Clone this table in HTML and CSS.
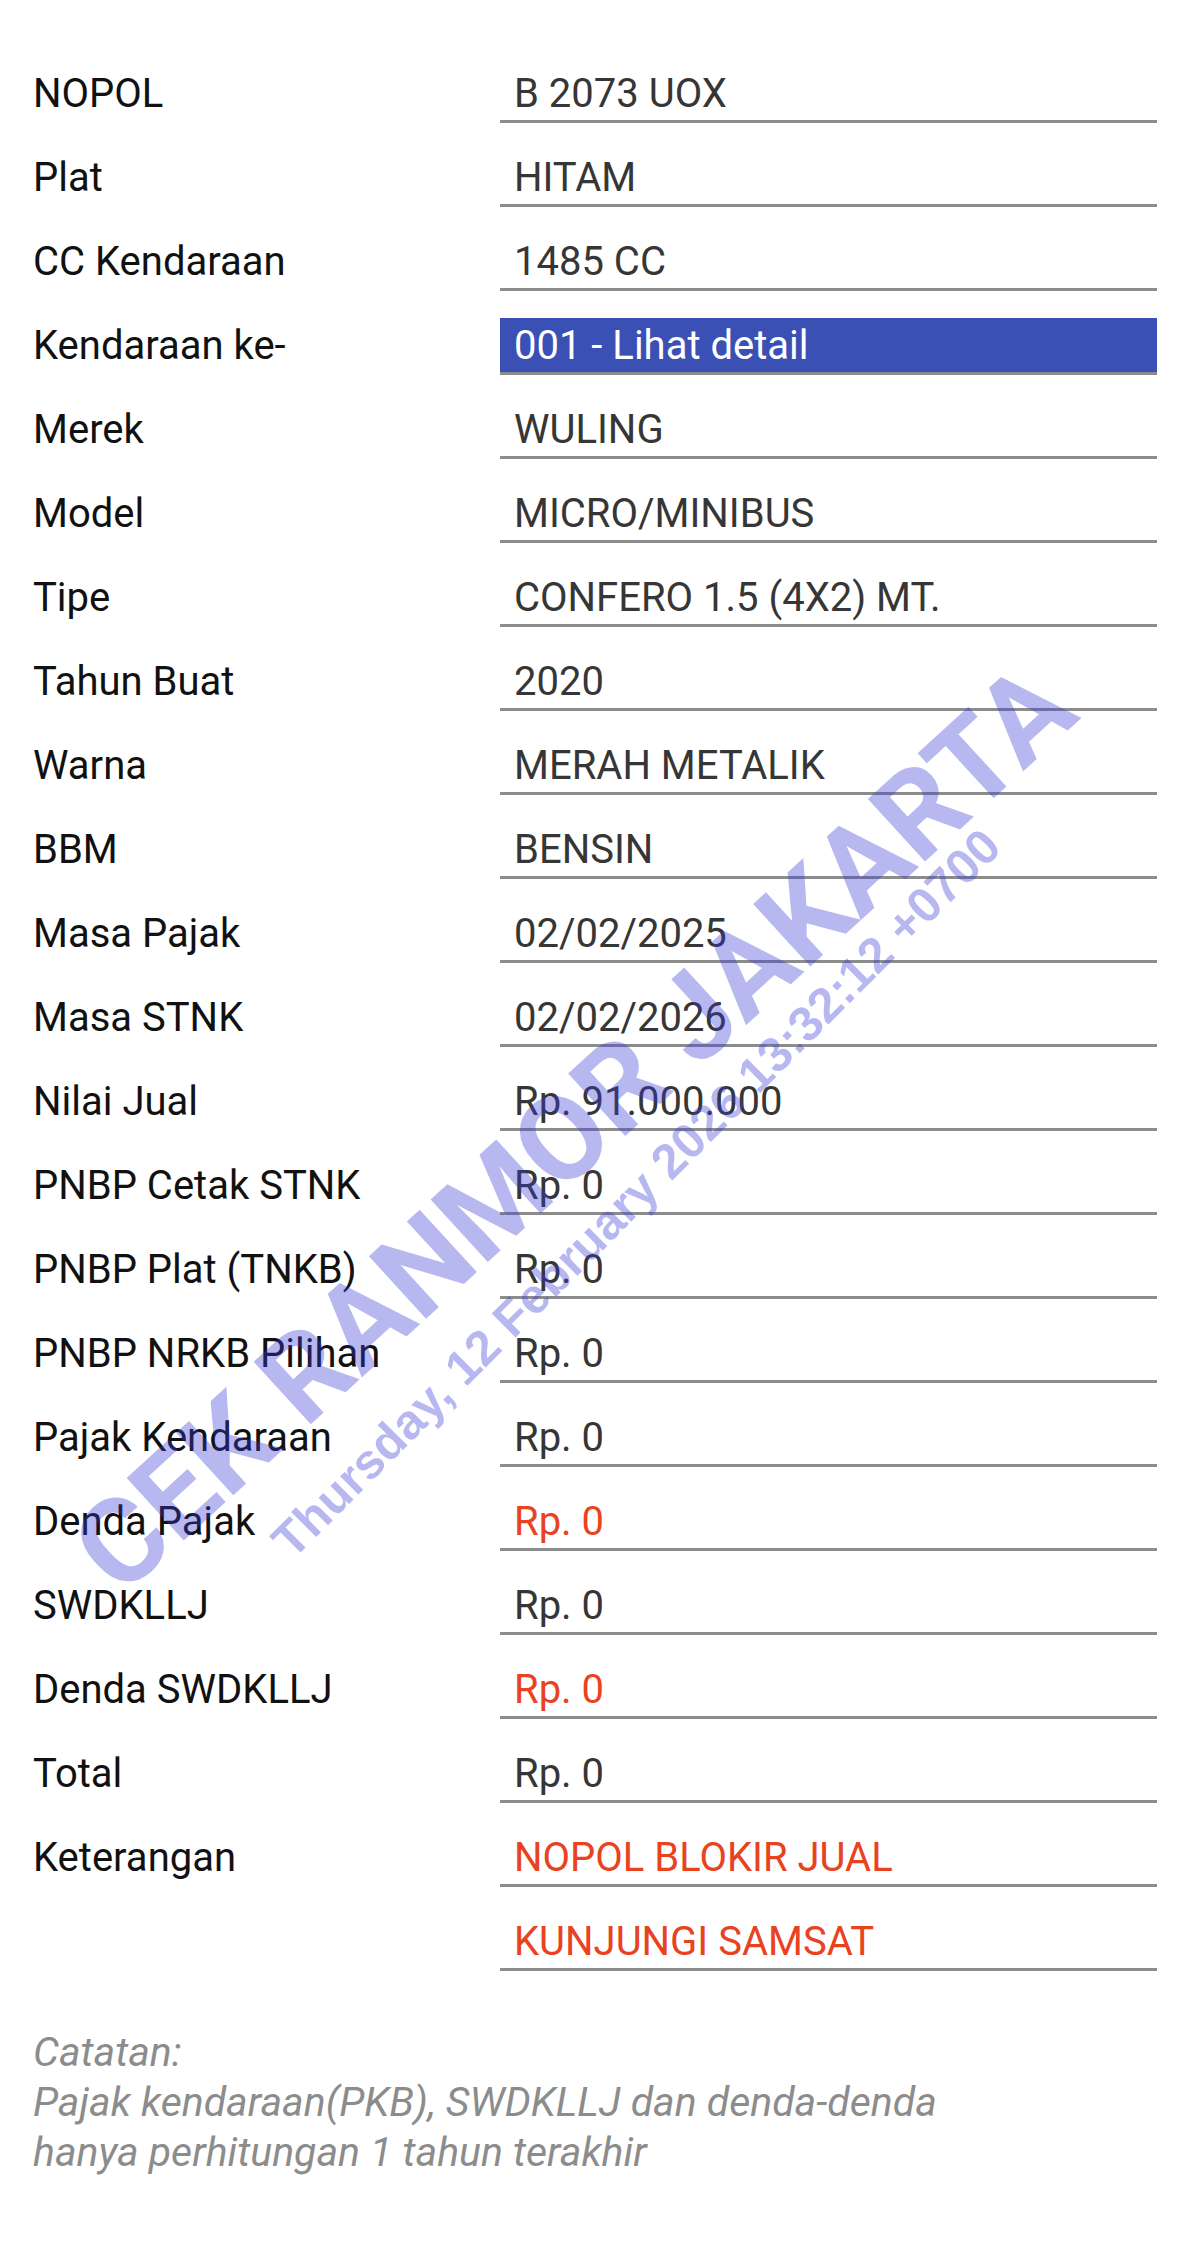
FILE: index.html
```html
<!DOCTYPE html>
<html lang="id">
<head>
<meta charset="utf-8">
<title>Cek Ranmor</title>
<link rel="stylesheet" href="styles.css">
</head>
<body>
<main class="page">
  <div class="table">
    <div class="row"><div class="label">NOPOL</div><div class="value">B 2073 UOX</div></div>
    <div class="row"><div class="label">Plat</div><div class="value">HITAM</div></div>
    <div class="row"><div class="label">CC Kendaraan</div><div class="value">1485 CC</div></div>
    <div class="row"><div class="label">Kendaraan ke-</div><div class="value value-link">001 - Lihat detail</div></div>
    <div class="row"><div class="label">Merek</div><div class="value">WULING</div></div>
    <div class="row"><div class="label">Model</div><div class="value">MICRO/MINIBUS</div></div>
    <div class="row"><div class="label">Tipe</div><div class="value">CONFERO 1.5 (4X2) MT.</div></div>
    <div class="row"><div class="label">Tahun Buat</div><div class="value">2020</div></div>
    <div class="row"><div class="label">Warna</div><div class="value">MERAH METALIK</div></div>
    <div class="row"><div class="label">BBM</div><div class="value">BENSIN</div></div>
    <div class="row"><div class="label">Masa Pajak</div><div class="value">02/02/2025</div></div>
    <div class="row"><div class="label">Masa STNK</div><div class="value">02/02/2026</div></div>
    <div class="row"><div class="label">Nilai Jual</div><div class="value">Rp. 91.000.000</div></div>
    <div class="row"><div class="label">PNBP Cetak STNK</div><div class="value">Rp. 0</div></div>
    <div class="row"><div class="label">PNBP Plat (TNKB)</div><div class="value">Rp. 0</div></div>
    <div class="row"><div class="label">PNBP NRKB Pilihan</div><div class="value">Rp. 0</div></div>
    <div class="row"><div class="label">Pajak Kendaraan</div><div class="value">Rp. 0</div></div>
    <div class="row"><div class="label">Denda Pajak</div><div class="value value-red">Rp. 0</div></div>
    <div class="row"><div class="label">SWDKLLJ</div><div class="value">Rp. 0</div></div>
    <div class="row"><div class="label">Denda SWDKLLJ</div><div class="value value-red">Rp. 0</div></div>
    <div class="row"><div class="label">Total</div><div class="value">Rp. 0</div></div>
    <div class="row"><div class="label">Keterangan</div><div class="value value-red">NOPOL BLOKIR JUAL</div></div>
    <div class="row"><div class="label"></div><div class="value value-red">KUNJUNGI SAMSAT</div></div>
  </div>

  <div class="notes">
    <p>Catatan:</p>
    <p>Pajak kendaraan(PKB), SWDKLLJ dan denda-denda</p>
    <p>hanya perhitungan 1 tahun terakhir</p>
  </div>
</main>

<div class="watermark" aria-hidden="true">
  <span class="wm-main">CEK RANMOR JAKARTA</span>
  <span class="wm-date">Thursday, 12 February 2026 13:32:12 +0700</span>
</div>
</body>
</html>
```

FILE: styles.css
```css
html, body {
  margin: 0;
  padding: 0;
  background: #ffffff;
}

body {
  width: 1200px;
  height: 2254px;
  position: relative;
  overflow: hidden;
  font-family: Roboto, "Noto Sans", Arial, sans-serif;
}

.page {
  padding: 66px 0 0 33px;
}

.table {
  display: flex;
  flex-direction: column;
  gap: 27px;
}

.row {
  display: grid;
  grid-template-columns: 467px 657px;
  height: 57px;
}

.label,
.value {
  font-size: 40px;
  line-height: 52px;
  padding-top: 2px;
  white-space: nowrap;
}

.label {
  color: #111111;
}

.value {
  color: #363636;
  padding-left: 14px;
  border-bottom: 3px solid #8c8c8c;
}

.value-link {
  background: #3a50b4;
  color: #ffffff;
}

.value-red {
  color: #e8421f;
}

.notes {
  margin-top: 56px;
}

.notes p {
  margin: 0;
  font-size: 41px;
  line-height: 50px;
  font-style: italic;
  color: #8c8c8c;
}

.watermark {
  position: absolute;
  inset: 0;
  pointer-events: none;
}

.wm-main,
.wm-date {
  position: absolute;
  white-space: nowrap;
  color: rgba(58, 58, 215, 0.36);
  font-weight: 700;
}

.wm-main {
  left: 574px;
  top: 1128px;
  font-family: Roboto, Arial, sans-serif;
  font-size: 119px;
  transform: translate(-50%, -50%) rotate(-42.5deg);
}

.wm-date {
  left: 636px;
  top: 1193px;
  font-family: "Liberation Sans", Arial, sans-serif;
  font-size: 49px;
  transform: translate(-50%, -50%) rotate(-45deg);
}
```
